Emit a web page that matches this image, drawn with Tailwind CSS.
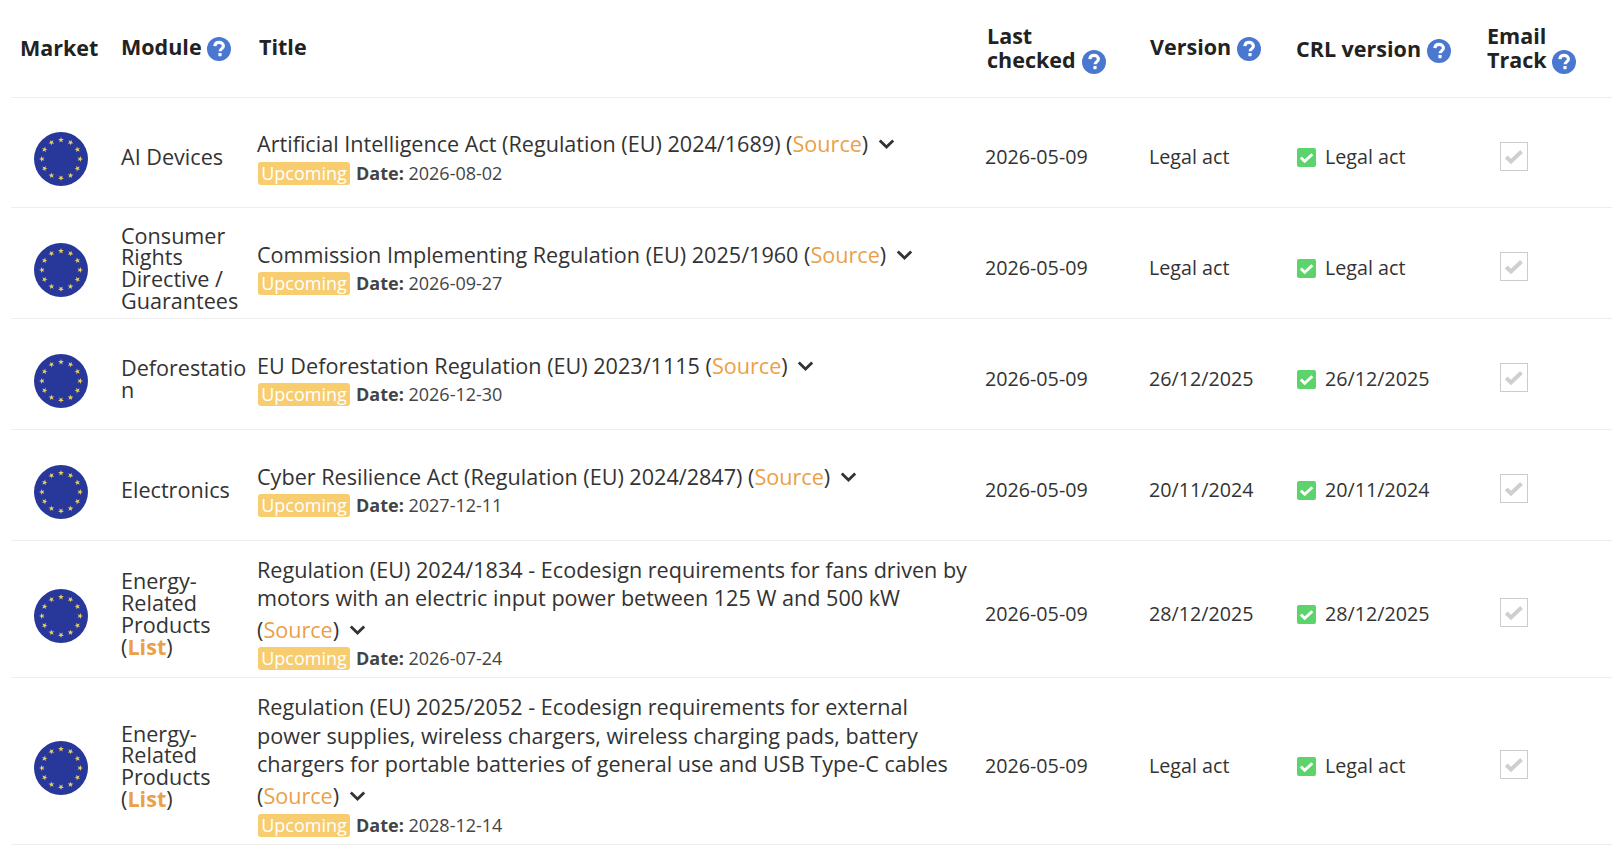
<!DOCTYPE html>
<html>
<head>
<meta charset="utf-8">
<script src="https://cdn.jsdelivr.net/npm/@tailwindcss/browser@4"></script>
<title>Tracker</title>
</head>
<body class="bg-white font-['Open_Sans',sans-serif] text-[#333] overflow-hidden">
<svg width="0" height="0" class="absolute">
  <defs>
    <symbol id="help" viewBox="0 0 24 24">
      <circle cx="12" cy="12" r="12" fill="#4a77d0"/>
      <path d="M7.800 9.200c.2-2.400 2-3.800 4.300-3.800 2.500 0 4.300 1.400 4.300 3.500 0 2.900-3.300 3-3.300 5.400" fill="none" stroke="#fff" stroke-width="3.100"/>
      <rect x="11.400" y="16" width="3.200" height="3.200" rx=".4" fill="#fff"/>
    </symbol>
    <symbol id="eu" viewBox="0 0 54 54">
      <circle cx="27" cy="27" r="27" fill="#27389a"/>
      <g fill="#e9cd62">
        <polygon id="s" points="27,5 27.700,7 29.900,7.100 28.100,8.400 28.800,10.400 27,9.200 25.200,10.400 25.900,8.400 24.100,7.100 26.300,7"/>
        <use href="#s" transform="rotate(30 27 27)"/>
        <use href="#s" transform="rotate(60 27 27)"/>
        <use href="#s" transform="rotate(90 27 27)"/>
        <use href="#s" transform="rotate(120 27 27)"/>
        <use href="#s" transform="rotate(150 27 27)"/>
        <use href="#s" transform="rotate(180 27 27)"/>
        <use href="#s" transform="rotate(210 27 27)"/>
        <use href="#s" transform="rotate(240 27 27)"/>
        <use href="#s" transform="rotate(270 27 27)"/>
        <use href="#s" transform="rotate(300 27 27)"/>
        <use href="#s" transform="rotate(330 27 27)"/>
      </g>
    </symbol>
    <symbol id="chev" viewBox="0 0 17 30">
      <path d="M1.800 13.500 8.500 20l6.700-6.500" fill="none" stroke="#333" stroke-width="2.800"/>
    </symbol>
    <symbol id="ok" viewBox="0 0 19 19">
      <rect width="19" height="19" rx="2" fill="#5dd36b"/>
      <path d="M3.800 9.500l3.900 3.800L15.300 6.300" fill="none" stroke="#fff" stroke-width="2.900"/>
    </symbol>
    <symbol id="tick" viewBox="0 0 28 29">
      <rect x=".5" y=".5" width="27" height="28" fill="#fff" stroke="#ccc"/>
      <path d="M6.200 15l4.800 4.500L21.500 9.500" fill="none" stroke="#cfcfcf" stroke-width="4"/>
    </symbol>
  </defs>
</svg>

<div class="pl-[11px] w-[1612px]">
<table class="table-fixed w-[1601px] border-collapse">
  <colgroup>
    <col class="w-[100px]"><col class="w-[136px]"><col class="w-[728px]"><col class="w-[165px]"><col class="w-[147px]"><col class="w-[190px]"><col class="w-[135px]">
  </colgroup>
  <thead>
    <tr class="h-[97px] border-b border-[#eee] text-left text-[21.500px] leading-[24px] font-bold text-[#222]">
      <th class="pl-[9px] font-bold">Market</th>
      <th class="pl-[10px] font-bold">Module <svg class="inline w-6 h-6 align-[-6px]"><use href="#help"/></svg></th>
      <th class="pl-[12px] pb-[2px] font-bold">Title</th>
      <th class="pl-[12px] pt-[2px] font-bold">Last<br>checked <svg class="inline w-6 h-6 ml-[1px] align-[-6px]"><use href="#help"/></svg></th>
      <th class="pl-[10px] font-bold">Version <svg class="inline w-6 h-6 align-[-6px]"><use href="#help"/></svg></th>
      <th class="pl-[9px] pt-[4px] font-bold">CRL version <svg class="inline w-6 h-6 align-[-6px]"><use href="#help"/></svg></th>
      <th class="pl-[10px] pt-[2px] font-bold">Email<br>Track <svg class="inline w-6 h-6 align-[-6px]"><use href="#help"/></svg></th>
    </tr>
  </thead>
  <tbody class="text-[19.700px]">
    <tr class="h-[110px] border-b border-[#eee]">
      <td class="pt-[19px] pb-[5px]"><svg class="w-[54px] h-[54px] ml-[23px]"><use href="#eu"/></svg></td>
      <td class="pt-[16px] pb-[6px] pl-[10px] text-[21.600px] leading-[21.700px] wrap-anywhere">AI Devices</td>
      <td class="pt-[15px] pb-[4px] pl-[10px] pr-[6px]">
        <div class="text-[21.600px] leading-[28.600px]">Artificial Intelligence Act (Regulation (EU) 2024/1689) (<a class="text-[#eb9f47]">Source</a>) <svg class="inline w-[17px] h-[30px] ml-1 align-[-5px]"><use href="#chev"/></svg></div>
        <div class="flex items-center gap-[6px] h-[29px] text-[18px]"><span class="bg-[#f7cd70] text-white rounded-[3px] h-[23px] w-[92px] ml-[1px] text-center leading-[22px]">Upcoming</span><span class="text-[#444]"><b>Date:</b> 2026-08-02</span></div>
      </td>
      <td class="pt-[17px] pb-[7px] px-[10px]">2026-05-09</td>
      <td class="pt-[17px] pb-[7px] pl-[9px]">Legal act</td>
      <td class="pt-[17px] pb-[7px] px-[10px]"><div class="flex items-center gap-[9px]"><svg class="w-[19px] h-[19px] mt-[2px] shrink-0"><use href="#ok"/></svg>Legal act</div></td>
      <td class="pt-[19px] pb-[11px] pl-[23px]"><svg class="w-[28px] h-[29px] block"><use href="#tick"/></svg></td>
    </tr>
    <tr class="h-[111px] border-b border-[#eee]">
      <td class="pt-[19px] pb-[5px]"><svg class="w-[54px] h-[54px] ml-[23px]"><use href="#eu"/></svg></td>
      <td class="pt-[17px] pb-[6px] pl-[10px] text-[21.600px] leading-[21.700px] wrap-anywhere">Consumer Rights Directive / Guarantees</td>
      <td class="pt-[15px] pb-[4px] pl-[10px] pr-[6px]">
        <div class="text-[21.600px] leading-[28.600px]">Commission Implementing Regulation (EU) 2025/1960 (<a class="text-[#eb9f47]">Source</a>) <svg class="inline w-[17px] h-[30px] ml-1 align-[-5px]"><use href="#chev"/></svg></div>
        <div class="flex items-center gap-[6px] h-[29px] text-[18px]"><span class="bg-[#f7cd70] text-white rounded-[3px] h-[23px] w-[92px] ml-[1px] text-center leading-[22px]">Upcoming</span><span class="text-[#444]"><b>Date:</b> 2026-09-27</span></div>
      </td>
      <td class="pt-[17px] pb-[7px] px-[10px]">2026-05-09</td>
      <td class="pt-[17px] pb-[7px] pl-[9px]">Legal act</td>
      <td class="pt-[17px] pb-[7px] px-[10px]"><div class="flex items-center gap-[9px]"><svg class="w-[19px] h-[19px] mt-[2px] shrink-0"><use href="#ok"/></svg>Legal act</div></td>
      <td class="pt-[19px] pb-[11px] pl-[23px]"><svg class="w-[28px] h-[29px] block"><use href="#tick"/></svg></td>
    </tr>
    <tr class="h-[111px] border-b border-[#eee]">
      <td class="pt-[19px] pb-[5px]"><svg class="w-[54px] h-[54px] ml-[23px]"><use href="#eu"/></svg></td>
      <td class="pt-[16px] pb-[6px] pl-[10px] text-[21.600px] leading-[21.700px] wrap-anywhere">Deforestation</td>
      <td class="pt-[15px] pb-[4px] pl-[10px] pr-[6px]">
        <div class="text-[21.600px] leading-[28.600px]">EU Deforestation Regulation (EU) 2023/1115 (<a class="text-[#eb9f47]">Source</a>) <svg class="inline w-[17px] h-[30px] ml-1 align-[-5px]"><use href="#chev"/></svg></div>
        <div class="flex items-center gap-[6px] h-[29px] text-[18px]"><span class="bg-[#f7cd70] text-white rounded-[3px] h-[23px] w-[92px] ml-[1px] text-center leading-[22px]">Upcoming</span><span class="text-[#444]"><b>Date:</b> 2026-12-30</span></div>
      </td>
      <td class="pt-[17px] pb-[7px] px-[10px]">2026-05-09</td>
      <td class="pt-[17px] pb-[7px] pl-[9px]">26/12/2025</td>
      <td class="pt-[17px] pb-[7px] px-[10px]"><div class="flex items-center gap-[9px]"><svg class="w-[19px] h-[19px] mt-[2px] shrink-0"><use href="#ok"/></svg>26/12/2025</div></td>
      <td class="pt-[19px] pb-[11px] pl-[23px]"><svg class="w-[28px] h-[29px] block"><use href="#tick"/></svg></td>
    </tr>
    <tr class="h-[111px] border-b border-[#eee]">
      <td class="pt-[19px] pb-[5px]"><svg class="w-[54px] h-[54px] ml-[23px]"><use href="#eu"/></svg></td>
      <td class="pt-[16px] pb-[6px] pl-[10px] text-[21.600px] leading-[21.700px] wrap-anywhere">Electronics</td>
      <td class="pt-[15px] pb-[4px] pl-[10px] pr-[6px]">
        <div class="text-[21.600px] leading-[28.600px]">Cyber Resilience Act (Regulation (EU) 2024/2847) (<a class="text-[#eb9f47]">Source</a>) <svg class="inline w-[17px] h-[30px] ml-1 align-[-5px]"><use href="#chev"/></svg></div>
        <div class="flex items-center gap-[6px] h-[29px] text-[18px]"><span class="bg-[#f7cd70] text-white rounded-[3px] h-[23px] w-[92px] ml-[1px] text-center leading-[22px]">Upcoming</span><span class="text-[#444]"><b>Date:</b> 2027-12-11</span></div>
      </td>
      <td class="pt-[17px] pb-[7px] px-[10px]">2026-05-09</td>
      <td class="pt-[17px] pb-[7px] pl-[9px]">20/11/2024</td>
      <td class="pt-[17px] pb-[7px] px-[10px]"><div class="flex items-center gap-[9px]"><svg class="w-[19px] h-[19px] mt-[2px] shrink-0"><use href="#ok"/></svg>20/11/2024</div></td>
      <td class="pt-[19px] pb-[11px] pl-[23px]"><svg class="w-[28px] h-[29px] block"><use href="#tick"/></svg></td>
    </tr>
    <tr class="h-[137px] border-b border-[#eee]">
      <td class="pt-[19px] pb-[5px]"><svg class="w-[54px] h-[54px] ml-[23px]"><use href="#eu"/></svg></td>
      <td class="pt-[16px] pb-[6px] pl-[10px] text-[21.600px] leading-[21.700px] wrap-anywhere">Energy-Related Products (<a class="text-[#eb9f47] font-bold">List</a>)</td>
      <td class="pt-[15px] pb-[4px] pl-[10px] pr-[6px]">
        <div class="text-[21.600px] leading-[28.600px]">Regulation (EU) 2024/1834 - Ecodesign requirements for fans driven by motors with an electric input power between 125 W and 500 kW (<a class="text-[#eb9f47]">Source</a>) <svg class="inline w-[17px] h-[30px] ml-1 align-[-5px]"><use href="#chev"/></svg></div>
        <div class="flex items-center gap-[6px] h-[29px] text-[18px]"><span class="bg-[#f7cd70] text-white rounded-[3px] h-[23px] w-[92px] ml-[1px] text-center leading-[22px]">Upcoming</span><span class="text-[#444]"><b>Date:</b> 2026-07-24</span></div>
      </td>
      <td class="pt-[17px] pb-[7px] px-[10px]">2026-05-09</td>
      <td class="pt-[17px] pb-[7px] pl-[9px]">28/12/2025</td>
      <td class="pt-[17px] pb-[7px] px-[10px]"><div class="flex items-center gap-[9px]"><svg class="w-[19px] h-[19px] mt-[2px] shrink-0"><use href="#ok"/></svg>28/12/2025</div></td>
      <td class="pt-[19px] pb-[11px] pl-[23px]"><svg class="w-[28px] h-[29px] block"><use href="#tick"/></svg></td>
    </tr>
    <tr class="h-[166px] border-b border-[#eee]">
      <td class="pt-[19px] pb-[5px]"><svg class="w-[54px] h-[54px] ml-[23px]"><use href="#eu"/></svg></td>
      <td class="pt-[16px] pb-[6px] pl-[10px] text-[21.600px] leading-[21.700px] wrap-anywhere">Energy-Related Products (<a class="text-[#eb9f47] font-bold">List</a>)</td>
      <td class="pt-[15px] pb-[4px] pl-[10px] pr-[6px]">
        <div class="text-[21.600px] leading-[28.600px]">Regulation (EU) 2025/2052 - Ecodesign requirements for external power supplies, wireless chargers, wireless charging pads, battery chargers for portable batteries of general use and USB Type-C cables (<a class="text-[#eb9f47]">Source</a>) <svg class="inline w-[17px] h-[30px] ml-1 align-[-5px]"><use href="#chev"/></svg></div>
        <div class="flex items-center gap-[6px] h-[29px] text-[18px]"><span class="bg-[#f7cd70] text-white rounded-[3px] h-[23px] w-[92px] ml-[1px] text-center leading-[22px]">Upcoming</span><span class="text-[#444]"><b>Date:</b> 2028-12-14</span></div>
      </td>
      <td class="pt-[17px] pb-[7px] px-[10px]">2026-05-09</td>
      <td class="pt-[17px] pb-[7px] pl-[9px]">Legal act</td>
      <td class="pt-[17px] pb-[7px] px-[10px]"><div class="flex items-center gap-[9px]"><svg class="w-[19px] h-[19px] mt-[2px] shrink-0"><use href="#ok"/></svg>Legal act</div></td>
      <td class="pt-[19px] pb-[11px] pl-[23px]"><svg class="w-[28px] h-[29px] block"><use href="#tick"/></svg></td>
    </tr>
  </tbody>
</table>
</div>
</body>
</html>
